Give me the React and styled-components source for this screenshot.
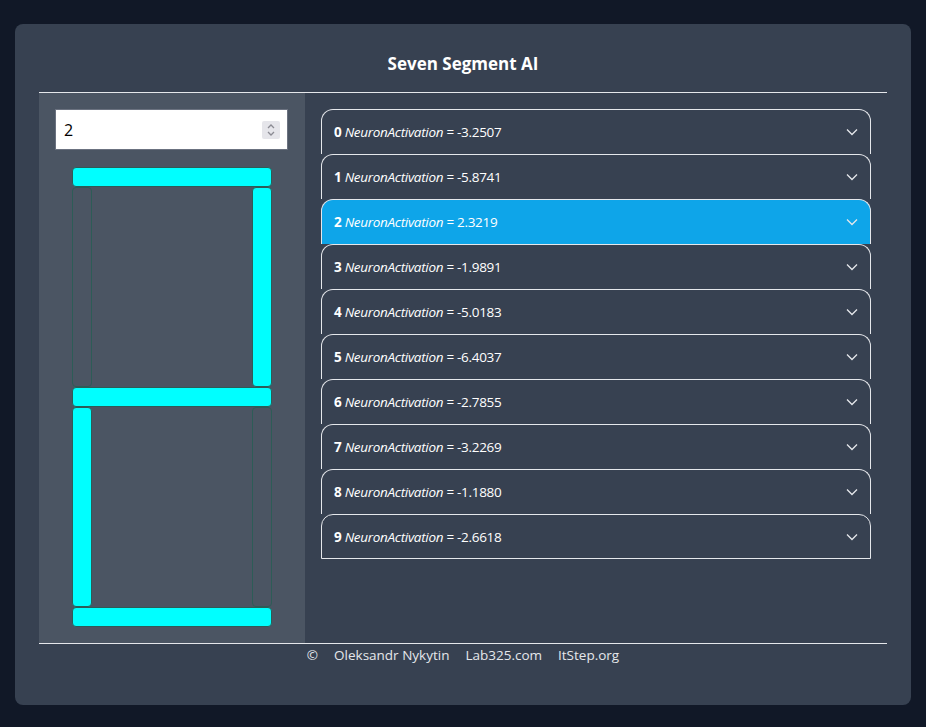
import React from "react";
import styled, { createGlobalStyle } from "styled-components";

const GlobalStyle = createGlobalStyle`
  * { box-sizing: border-box; }
  body {
    margin: 0;
    background: #111827;
    font-family: "Open Sans", "Noto Sans", sans-serif;
    color: #f3f4f6;
  }
`;

const Page = styled.div`
  min-height: 727px;
  padding: 24px 15px 23px 15px;
`;

const Card = styled.div`
  background: #374151;
  border-radius: 8px;
  padding: 28px 24px 40px 24px;
  display: flex;
  flex-direction: column;
`;

const Header = styled.header`
  border-bottom: 1px solid #e5e7eb;
  padding-bottom: 16px;
  text-align: center;
`;

const Title = styled.h1`
  margin: 0;
  font-size: 17px;
  line-height: 24px;
  font-weight: 700;
  color: #ffffff;
`;

const Main = styled.main`
  display: flex;
  height: 550px;
`;

const LeftPanel = styled.section`
  width: 266px;
  background: #4b5563;
  padding: 16px 17px 16px 16px;
  display: flex;
  flex-direction: column;
  align-items: stretch;
  gap: 17px;
`;

const InputBox = styled.div`
  height: 41px;
  background: #ffffff;
  border: 1px solid #6b7280;
  display: flex;
  align-items: center;
  padding: 0 7px 0 8px;
`;

const NumberInput = styled.input`
  flex: 1;
  min-width: 0;
  border: none;
  outline: none;
  background: transparent;
  font-family: inherit;
  font-size: 16px;
  color: #000;
  padding: 0;
`;

const Spinner = styled.div`
  width: 18px;
  height: 18px;
  background: #e5e5ea;
  border-radius: 2px;
  display: flex;
  align-items: center;
  justify-content: center;
`;

const Display = styled.div`
  align-self: center;
  display: grid;
  grid-template-columns: 20px 160px 20px;
  grid-template-rows: 20px 200px 20px 200px 20px;
`;

const Segment = styled.div`
  grid-column: ${(p) => p.$col};
  grid-row: ${(p) => p.$row};
  border: 1px solid #2d5c57;
  border-radius: 4px;
  background: ${(p) => (p.$on ? "#00ffff" : "transparent")};
`;

const RightPanel = styled.section`
  flex: 1;
  padding: 16px;
  display: flex;
  flex-direction: column;
`;

const Item = styled.div`
  height: 45px;
  border: 1px solid #e5e7eb;
  border-bottom: ${(p) => (p.$last ? "1px solid #e5e7eb" : "none")};
  border-radius: 12px 12px 0 0;
  background: ${(p) => (p.$active ? "#0ea5e9" : "transparent")};
  display: flex;
  align-items: center;
  justify-content: space-between;
  padding: 0 12px 0 12px;
  font-size: 13.5px;
  letter-spacing: -0.3px;
  color: #ffffff;
`;

const Label = styled.span`
  white-space: nowrap;
`;

const Index = styled.b`
  font-weight: 700;
`;

const Name = styled.i`
  font-style: italic;
`;

const Footer = styled.footer`
  border-top: 1px solid #e5e7eb;
  display: flex;
  justify-content: center;
  gap: 16px;
  font-size: 13.5px;
  line-height: 20px;
  color: #e5e7eb;
  padding-top: 1px;
`;

const Chevron = () => (
  <svg width="12" height="8" viewBox="0 0 12 8" fill="none">
    <path d="M1 1.5 L6 6.5 L11 1.5" stroke="#e5e7eb" strokeWidth="1.3" />
  </svg>
);

const SpinIcon = () => (
  <svg width="10" height="14" viewBox="0 0 10 14" fill="none">
    <path d="M2 5 L5 2 L8 5" stroke="#8b8b93" strokeWidth="1.3" />
    <path d="M2 9 L5 12 L8 9" stroke="#8b8b93" strokeWidth="1.3" />
  </svg>
);

const activations = [
  "-3.2507",
  "-5.8741",
  "2.3219",
  "-1.9891",
  "-5.0183",
  "-6.4037",
  "-2.7855",
  "-3.2269",
  "-1.1880",
  "-2.6618",
];

// segments for digit 2: a b g e d
const segments = [
  { key: "a", col: "1 / 4", row: 1, on: true },
  { key: "f", col: 1, row: 2, on: false },
  { key: "b", col: 3, row: 2, on: true },
  { key: "g", col: "1 / 4", row: 3, on: true },
  { key: "e", col: 1, row: 4, on: true },
  { key: "c", col: 3, row: 4, on: false },
  { key: "d", col: "1 / 4", row: 5, on: true },
];

export default function App() {
  return (
    <>
      <GlobalStyle />
      <Page>
        <Card>
          <Header>
            <Title>Seven Segment AI</Title>
          </Header>
          <Main>
            <LeftPanel>
              <InputBox>
                <NumberInput defaultValue="2" />
                <Spinner>
                  <SpinIcon />
                </Spinner>
              </InputBox>
              <Display>
                {segments.map((s) => (
                  <Segment key={s.key} $col={s.col} $row={s.row} $on={s.on} />
                ))}
              </Display>
            </LeftPanel>
            <RightPanel>
              {activations.map((v, i) => (
                <Item key={i} $active={i === 2} $last={i === 9}>
                  <Label>
                    <Index>{i}</Index> <Name>NeuronActivation</Name> = {v}
                  </Label>
                  <Chevron />
                </Item>
              ))}
            </RightPanel>
          </Main>
          <Footer>
            <span>©</span>
            <span>Oleksandr Nykytin</span>
            <span>Lab325.com</span>
            <span>ItStep.org</span>
          </Footer>
        </Card>
      </Page>
    </>
  );
}
